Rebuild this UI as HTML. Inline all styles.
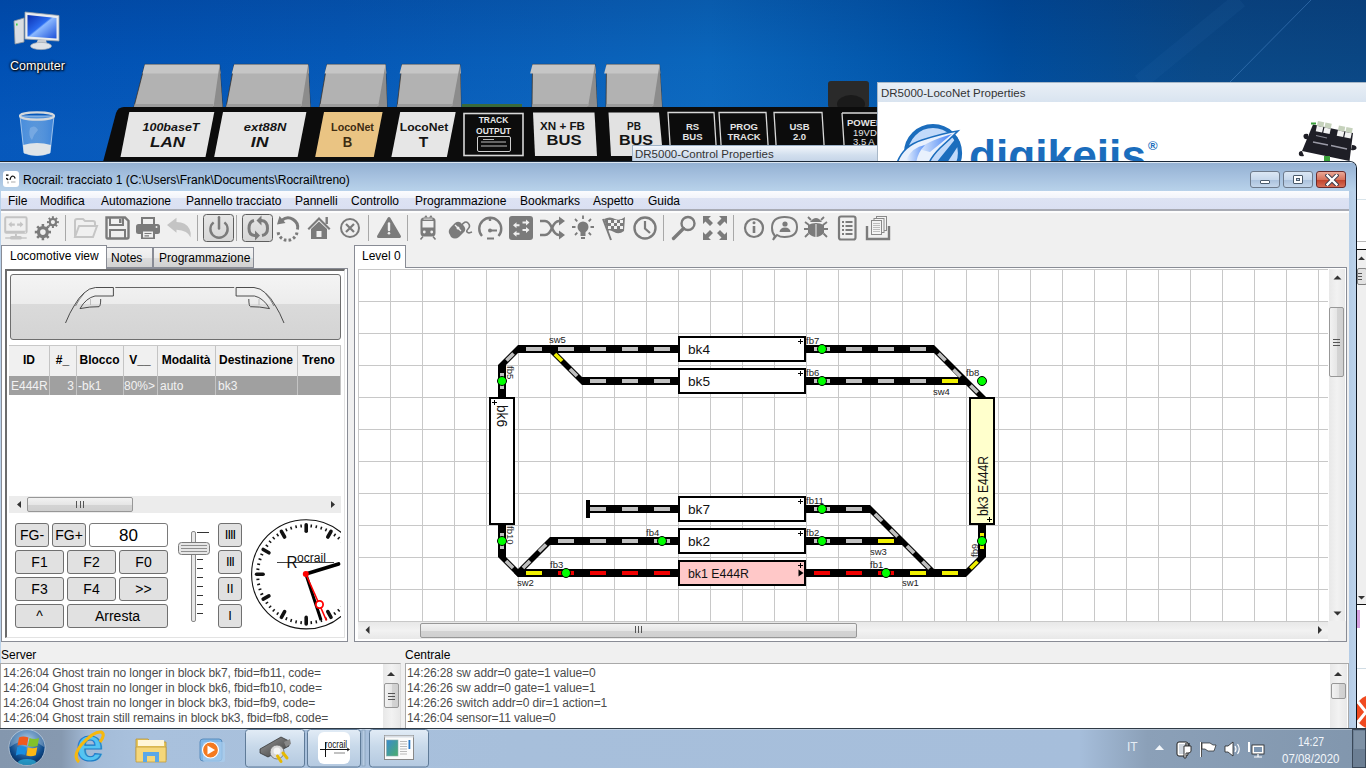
<!DOCTYPE html>
<html><head><meta charset="utf-8">
<style>
*{box-sizing:border-box;margin:0;padding:0}
html,body{width:1366px;height:768px;overflow:hidden;font-family:"Liberation Sans",sans-serif;font-size:12px;color:#000;position:relative}
.a{position:absolute}
.nw{white-space:nowrap}
#desk{left:0;top:0;width:1366px;height:768px;background:linear-gradient(180deg,rgba(0,10,60,.12) 0px,rgba(0,10,60,0) 60px,rgba(60,160,255,0) 60px,rgba(60,160,255,.10) 140px),linear-gradient(90deg,#0050b4 0%,#0558b6 25%,#0a62ba 45%,#0a66bc 52%,#0052a6 70%,#004c9c 74%,#0a4886 88%,#0a4683 100%)}
.menu{position:absolute;top:194px;font-size:12px;color:#000;white-space:nowrap}
.tbtn{position:absolute;top:171px;width:30px;height:17px;border:1px solid #6d7a8b;border-radius:3px;background:linear-gradient(#dbe7f4 0%,#c7d8ec 50%,#aac1dc 52%,#c4d6ea 100%)}
.sep{position:absolute;top:216px;width:1px;height:24px;background:#a8a8a8}
.ico{position:absolute;top:215px;width:24px;height:24px}
.press{position:absolute;top:213px;width:31px;height:29px;border:1px solid #6e6e6e;border-radius:3px;background:linear-gradient(#dcdcdc,#cfcfcf)}
.conn{position:absolute;background:linear-gradient(#c4c4c4 0%,#bdbdbd 25%,#adadad 27%,#a9a9a9 100%)}
.lbl{position:absolute;top:112px;height:45px;background:#e4e4e4;transform:skewX(-8deg);text-align:center;font-weight:bold;color:#111}
.lbl b{display:block;font-style:italic}
.blk{position:absolute;top:112px;height:45px;border:1.5px solid #fff;transform:skewX(-8deg);text-align:center;font-weight:bold;color:#fff;font-size:10px;line-height:13px}
</style></head><body>
<div id="desk" class="a"></div>
<svg class="a" style="left:1050px;top:0" width="316" height="90" viewBox="1050 0 316 90"><path d="M1311 0 L1230 82" stroke="#6aa6e8" stroke-opacity=".35" stroke-width="1"/><path d="M1240 0 L1140 82" stroke="#5a9ae0" stroke-opacity=".06" stroke-width="16"/></svg>

<!-- desktop icons -->
<svg class="a" style="left:10px;top:8px" width="56" height="44" viewBox="10 8 56 44">
 <defs><linearGradient id="scr" x1="0" y1="0" x2="1" y2="1"><stop offset="0" stop-color="#0a2fb0"/><stop offset=".45" stop-color="#2a6cf0"/><stop offset=".5" stop-color="#8ab8ff"/><stop offset="1" stop-color="#1c4fd8"/></linearGradient></defs>
 <path d="M14 21 L24 18 V42 L15 44Z" fill="#d9dde2" stroke="#8c949c" stroke-width=".8"/>
 <rect x="16" y="23.5" width="1.6" height="2" fill="#3cd04a"/>
 <path d="M25 12 L59 15.5 V41 L25 39Z" fill="#e9ecef" stroke="#9aa2aa" stroke-width=".8"/>
 <path d="M27.5 15 L56.5 18 V38.5 L27.5 36.5Z" fill="url(#scr)"/>
 <path d="M38 39.5 L46 40 L47 44 L36 44Z" fill="#c8cdd3"/>
 <ellipse cx="41" cy="46" rx="10.5" ry="3.6" fill="#dfe3e7" stroke="#a6adb4" stroke-width=".7"/>
</svg>
<div class="a nw" style="left:10px;top:59px;font-size:12.5px;color:#fff;text-shadow:0 0 2px #000,1px 1px 2px #000,0 0 3px #000">Computer</div>
<svg class="a" style="left:16px;top:110px" width="42" height="50" viewBox="16 110 42 50">
 <defs><linearGradient id="bin" x1="0" y1="0" x2="1" y2="0"><stop offset="0" stop-color="#5c9ee8" stop-opacity=".75"/><stop offset=".5" stop-color="#9cc8f4" stop-opacity=".55"/><stop offset="1" stop-color="#4a8ee0" stop-opacity=".8"/></linearGradient></defs>
 <path d="M20 116 L54 116 L50 153 Q37 158 24 153Z" fill="url(#bin)" stroke="#bcd6f0" stroke-width=".8"/>
 <ellipse cx="37" cy="116" rx="17" ry="3.6" fill="none" stroke="#d4d8dc" stroke-width="2.2"/>
 <path d="M23 145 Q37 141 51 145 L50 153 Q37 158 24 153Z" fill="#dfe4e8"/>
 <path d="M30 128 Q35 124 38 130 Q34 134 32 140 Q28 136 30 128Z" fill="#8ab6e6" opacity=".6"/>
</svg>
<!-- DR5000 device image -->
<svg class="a" style="left:95px;top:60px" width="790" height="102" viewBox="95 60 790 102">
<path d="M144.9 64.4 H219.6 L222.5 107 H133.9Z" fill="#b2b2b2" stroke="#3a2a1a" stroke-width=".7"/>
<path d="M144.9 64.4 H219.6 L220.5 73.4 H142.5Z" fill="#c6c6c6"/>
<path d="M219.6 64.4 L222.5 107 H213.5Z" fill="#8c8c8c"/>
<path d="M134.70000000000002 104 H213.5 L213.0 107 H133.9Z" fill="#9c9c9c"/>
<path d="M234.2 64.4 H308.1 L310.3 107 H226.1Z" fill="#b2b2b2" stroke="#3a2a1a" stroke-width=".7"/>
<path d="M234.2 64.4 H308.1 L309.0 73.4 H231.79999999999998Z" fill="#c6c6c6"/>
<path d="M308.1 64.4 L310.3 107 H301.3Z" fill="#8c8c8c"/>
<path d="M226.9 104 H301.3 L300.8 107 H226.1Z" fill="#9c9c9c"/>
<path d="M327 64.4 H385.5 L387 107 H319.6Z" fill="#b2b2b2" stroke="#3a2a1a" stroke-width=".7"/>
<path d="M327 64.4 H385.5 L386.4 73.4 H324.6Z" fill="#c6c6c6"/>
<path d="M385.5 64.4 L387 107 H378Z" fill="#8c8c8c"/>
<path d="M320.40000000000003 104 H378 L377.5 107 H319.6Z" fill="#9c9c9c"/>
<path d="M402 64.4 H460 L461 107 H397Z" fill="#b2b2b2" stroke="#3a2a1a" stroke-width=".7"/>
<path d="M402 64.4 H460 L460.9 73.4 H399.6Z" fill="#c6c6c6"/>
<path d="M460 64.4 L461 107 H452Z" fill="#8c8c8c"/>
<path d="M397.8 104 H452 L451.5 107 H397Z" fill="#9c9c9c"/>
<rect x="462" y="104" width="60" height="4" fill="#3a6a3a"/>
<path d="M532.5 64.4 H595 L597 107 H532Z" fill="#b2b2b2" stroke="#3a2a1a" stroke-width=".7"/>
<path d="M532.5 64.4 H595 L595.9 73.4 H530.1Z" fill="#c6c6c6"/>
<path d="M595 64.4 L597 107 H588Z" fill="#8c8c8c"/>
<path d="M532.8 104 H588 L587.5 107 H532Z" fill="#9c9c9c"/>
<path d="M606.5 64.4 H659.5 L662 107 H606Z" fill="#b2b2b2" stroke="#3a2a1a" stroke-width=".7"/>
<path d="M606.5 64.4 H659.5 L660.4 73.4 H604.1Z" fill="#c6c6c6"/>
<path d="M659.5 64.4 L662 107 H653Z" fill="#8c8c8c"/>
<path d="M606.8 104 H653 L652.5 107 H606Z" fill="#9c9c9c"/>
<rect x="828" y="81" width="41" height="27" rx="3" fill="#2a2a2a"/><ellipse cx="851" cy="104" rx="14" ry="9" fill="#1a1a1a"/>
<path d="M124 107 H885 V162 H103 L116 113 Q118 107 124 107Z" fill="#0c0c0c"/>
<path d="M129.3 112 H214.3 L205.5 157 H120.5Z" fill="#e6e6e6"/><text x="171" y="131" text-anchor="middle" font-family="Liberation Sans" font-weight="bold" font-style="italic" font-size="11" fill="#141414" textLength="57" lengthAdjust="spacingAndGlyphs">100baseT</text><text x="167.5" y="146.5" text-anchor="middle" font-family="Liberation Sans" font-weight="bold" font-style="italic" font-size="15" fill="#141414" textLength="35" lengthAdjust="spacingAndGlyphs">LAN</text>
<path d="M223.0 112 H306.40000000000003 L297.6 157 H214.2Z" fill="#e6e6e6"/><text x="265" y="131" text-anchor="middle" font-family="Liberation Sans" font-weight="bold" font-style="italic" font-size="11" fill="#141414" textLength="42.5" lengthAdjust="spacingAndGlyphs">ext88N</text><text x="259.6" y="146.5" text-anchor="middle" font-family="Liberation Sans" font-weight="bold" font-style="italic" font-size="15" fill="#141414" textLength="17.6" lengthAdjust="spacingAndGlyphs">IN</text>
<path d="M324.0 112 H382.6 L373.8 157 H315.2Z" fill="#eac483"/><text x="352.5" y="131" text-anchor="middle" font-family="Liberation Sans" font-weight="bold"  font-size="11" fill="#3e2c12" textLength="42.8" lengthAdjust="spacingAndGlyphs">LocoNet</text><text x="347.6" y="146.5" text-anchor="middle" font-family="Liberation Sans" font-weight="bold"  font-size="15" fill="#3e2c12" textLength="9.5" lengthAdjust="spacingAndGlyphs">B</text>
<path d="M400.2 112 H455.7 L446.9 157 H391.4Z" fill="#e6e6e6"/><text x="424" y="131" text-anchor="middle" font-family="Liberation Sans" font-weight="bold"  font-size="11" fill="#141414" textLength="48.5" lengthAdjust="spacingAndGlyphs">LocoNet</text><text x="423.5" y="146.5" text-anchor="middle" font-family="Liberation Sans" font-weight="bold"  font-size="15" fill="#141414" textLength="9.5" lengthAdjust="spacingAndGlyphs">T</text>
<rect x="464" y="113.5" width="59" height="42" fill="none" stroke="#d8d8d8" stroke-width="1.6"/>
<text x="493.5" y="123" text-anchor="middle" font-family="Liberation Sans" font-weight="bold" font-size="8.5" fill="#e8e8e8">TRACK</text>
<text x="493.5" y="133.5" text-anchor="middle" font-family="Liberation Sans" font-weight="bold" font-size="8.5" fill="#e8e8e8">OUTPUT</text>
<rect x="477.5" y="136.5" width="33" height="15" rx="1.5" fill="none" stroke="#cfcfcf" stroke-width="1"/><path d="M481 142 H506 M483 139.5 H494 M481 146 H507" stroke="#bbb" stroke-width="1.2"/>
<path d="M533 112.5 H594.5 L597 156 H535Z" fill="#e2e2e2"/>
<text x="562.5" y="129.5" text-anchor="middle" font-family="Liberation Sans" font-weight="bold" font-size="10" fill="#141414" textLength="45" lengthAdjust="spacingAndGlyphs">XN + FB</text>
<text x="564" y="145" text-anchor="middle" font-family="Liberation Sans" font-weight="bold" font-size="14.5" fill="#141414" textLength="35" lengthAdjust="spacingAndGlyphs">BUS</text>
<path d="M608.5 112.5 H659 L663 156 H611Z" fill="#e2e2e2"/>
<text x="634" y="129.5" text-anchor="middle" font-family="Liberation Sans" font-weight="bold" font-size="10" fill="#141414">PB</text>
<text x="636" y="145" text-anchor="middle" font-family="Liberation Sans" font-weight="bold" font-size="14.5" fill="#141414" textLength="34" lengthAdjust="spacingAndGlyphs">BUS</text>
<path d="M668 112.5 H714 L717 160 H671Z" fill="none" stroke="#d8d8d8" stroke-width="1.3"/><text x="692.5" y="129.5" text-anchor="middle" font-family="Liberation Sans" font-weight="bold" font-size="9.5" fill="#e4e4e4">RS</text><text x="692.5" y="140" text-anchor="middle" font-family="Liberation Sans" font-weight="bold" font-size="9.5" fill="#e4e4e4">BUS</text>
<path d="M719 112.5 H766 L769 160 H722Z" fill="none" stroke="#d8d8d8" stroke-width="1.3"/><text x="744.0" y="129.5" text-anchor="middle" font-family="Liberation Sans" font-weight="bold" font-size="9.5" fill="#e4e4e4">PROG</text><text x="744.0" y="140" text-anchor="middle" font-family="Liberation Sans" font-weight="bold" font-size="9.5" fill="#e4e4e4">TRACK</text>
<path d="M774 112.5 H822 L825 160 H777Z" fill="none" stroke="#d8d8d8" stroke-width="1.3"/><text x="799.5" y="129.5" text-anchor="middle" font-family="Liberation Sans" font-weight="bold" font-size="9.5" fill="#e4e4e4">USB</text><text x="799.5" y="140" text-anchor="middle" font-family="Liberation Sans" font-weight="bold" font-size="9.5" fill="#e4e4e4">2.0</text>
<path d="M842 113 H885 M842 113 L845 160" fill="none" stroke="#d8d8d8" stroke-width="1.3"/>
<text x="847" y="126" font-family="Liberation Sans" font-weight="bold" font-size="9.5" fill="#e4e4e4">POWER</text>
<text x="853" y="135.5" font-family="Liberation Sans" font-size="9.5" fill="#e4e4e4">19VDC</text>
<text x="853" y="145" font-family="Liberation Sans" font-size="9.5" fill="#e4e4e4">3.5 A</text>
</svg>
<!-- tooltip window -->
<div class="a nw" style="left:632px;top:145px;width:250px;height:17px;background:linear-gradient(#f2f6fb,#d2dfee 60%,#c6d5e8);border:1px solid #9db2c8;border-right:none;font-size:11.5px;color:#333;padding-left:2px;line-height:16px">DR5000-Control Properties</div>
<!-- digikeijs window -->
<div class="a" style="left:877px;top:82px;width:489px;height:90px;background:#fff;border-left:1px solid #a8b8c8;border-top:1px solid #a8b8c8"></div>
<div class="a nw" style="left:878px;top:83px;width:488px;height:19px;background:linear-gradient(#e9eff6,#d9e4f0);font-size:11.5px;color:#333;padding-left:3px;line-height:20px">DR5000-LocoNet Properties</div>
<svg class="a" style="left:890px;top:115px" width="280" height="47" viewBox="890 115 280 47">
 <defs><linearGradient id="dg1" x1="0" y1="0" x2="1" y2="0"><stop offset="0" stop-color="#e6f0fd"/><stop offset="1" stop-color="#3f7ff5"/></linearGradient></defs>
 <circle cx="933" cy="153" r="27" fill="#c2dafa" stroke="#1b6dbd" stroke-width="4.2"/>
 <path d="M897 163 Q903 146 922 140 Q944 133 958 131 Q950 139 940 148 Q932 156 929 163Z" fill="#e9f1fd" stroke="#1b6dbd" stroke-width="1.6"/>
 <path d="M918 149 Q928 141 952 134 Q940 144 930 152Z" fill="url(#dg1)"/>
 <path d="M906 160 Q912 147 925 145 Q918 152 916 163Z" fill="url(#dg1)" opacity=".8"/>
 <path d="M936 163 L957 137 L960 143 L947 163Z" fill="#1b6dbd"/>
 <text x="969" y="171" font-family="Liberation Sans" font-weight="bold" font-size="45" fill="#1b6dbd" textLength="177" lengthAdjust="spacingAndGlyphs">digikeijs</text>
 <text x="1148" y="150" font-family="Liberation Sans" font-weight="bold" font-size="13" fill="#1b6dbd">®</text>
</svg>
<svg class="a" style="left:1295px;top:115px" width="71" height="48" viewBox="1295 115 71 48">
 <path d="M1313 124.5 L1353 133 L1349.5 161 L1302 151Z" fill="#1e1e26"/>
 <path d="M1308 134 Q1303 133 1303.5 137 Q1304.5 140 1308 139Z M1302 151 Q1298 151 1299 155 Q1300 157 1304 156Z M1352 145 Q1357 145 1356.5 148.5 Q1355.5 151 1351 150Z" fill="#1e1e26"/>
 <rect x="1317" y="120.8" width="6.5" height="5" fill="#c6d2bc" transform="rotate(12.0 1317 125.3)"/><rect x="1317" y="125.8" width="6.5" height="5.5" fill="#f2f2f2" transform="rotate(12.0 1317 125.3)"/><rect x="1324.5" y="122.4" width="6.5" height="5" fill="#c6d2bc" transform="rotate(12.0 1324.5 126.9)"/><rect x="1324.5" y="127.4" width="6.5" height="5.5" fill="#f2f2f2" transform="rotate(12.0 1324.5 126.9)"/><rect x="1338" y="125.3" width="6.5" height="5" fill="#c6d2bc" transform="rotate(12.0 1338 129.8)"/><rect x="1338" y="130.3" width="6.5" height="5.5" fill="#f2f2f2" transform="rotate(12.0 1338 129.8)"/><rect x="1345.5" y="126.9" width="6.5" height="5" fill="#c6d2bc" transform="rotate(12.0 1345.5 131.4)"/><rect x="1345.5" y="131.9" width="6.5" height="5.5" fill="#f2f2f2" transform="rotate(12.0 1345.5 131.4)"/>
 <rect x="1311" y="122.5" width="5" height="2" fill="#3aa03a"/>
 <path d="M1313 142 L1328 145 M1331 145.5 L1347 149" stroke="#9a9aa6" stroke-width="1.5"/>
 <path d="M1316 135.5 L1327 138" stroke="#8a8a96" stroke-width="1.2"/>
 <rect x="1324" y="156" width="6" height="5" fill="#3aa03a"/>
</svg>

<!-- main window frame -->
<div class="a" style="left:0;top:161px;width:1357px;height:567px;background:#b9d1ea;border-top:1px solid #1b2838;border-right:1px solid #0d1a28;border-radius:0 7px 0 0"></div>
<div class="a" style="left:0;top:162px;width:1356px;height:29px;border-radius:0 6px 0 0;background:linear-gradient(#dbe6f2 0px,#dbe6f2 1px,#94b1d3 1px,#a6c1df 50%,#b8d2ea 100%)"></div>
<div class="a" style="left:3px;top:171px;width:16px;height:16px;background:#fff;border-radius:3px"><svg class="a" style="left:0;top:0" width="16" height="16"><path d="M3 4.2 H5.5 M3 7.5 Q4.5 7.5 5 9" stroke="#000" stroke-width="1.3" fill="none"/><path d="M7 9 Q7.5 5.5 9.5 5 Q11.5 5 12.2 7.5" stroke="#111" stroke-width="1.2" fill="none"/><path d="M8 11 H12.5" stroke="#888" stroke-width=".7"/><path d="M5 10.5 V12.5" stroke="#777" stroke-width=".8"/></svg></div>
<div class="a nw" style="left:23px;top:173px;font-size:12px;color:#000">Rocrail: tracciato 1 (C:\Users\Frank\Documents\Rocrail\treno)</div>
<div class="tbtn" style="left:1250px"><div class="a" style="left:9px;top:8px;width:10px;height:4px;background:#fff;border:1px solid #4a5a6a;border-radius:1px"></div></div>
<div class="tbtn" style="left:1283px"><div class="a" style="left:9px;top:3px;width:10px;height:9px;background:#fff;border:1px solid #4a5a6a;border-radius:1px"><div class="a" style="left:2px;top:2px;width:4px;height:3px;border:1px solid #4a5a6a;background:#c7d8ec"></div></div></div>
<div class="tbtn" style="left:1316px;border-color:#6b2a2a;background:linear-gradient(#eaa897 0%,#d7735c 50%,#c0412a 52%,#d66f58 100%)"><svg class="a" style="left:8px;top:2px" width="14" height="12" viewBox="0 0 14 12"><path d="M2.5 1.5 L11.5 10.5 M11.5 1.5 L2.5 10.5" stroke="#3a3a4a" stroke-width="4.2" stroke-linecap="square"/><path d="M2.5 1.5 L11.5 10.5 M11.5 1.5 L2.5 10.5" stroke="#fff" stroke-width="2.4" stroke-linecap="square"/></svg></div>
<div class="a" style="left:1px;top:191px;width:1348px;height:22px;background:linear-gradient(#fbfcfe 0px,#f2f4fa 7px,#dde3f3 7px,#dae0f2 18px,#a8abb4 18px,#a8abb4 20px,#fdfdfd 20px)"></div>
<span class="menu" style="left:8px">File</span>
<span class="menu" style="left:40px">Modifica</span>
<span class="menu" style="left:101px">Automazione</span>
<span class="menu" style="left:186px">Pannello tracciato</span>
<span class="menu" style="left:295px">Pannelli</span>
<span class="menu" style="left:351px">Controllo</span>
<span class="menu" style="left:415px">Programmazione</span>
<span class="menu" style="left:520px">Bookmarks</span>
<span class="menu" style="left:593px">Aspetto</span>
<span class="menu" style="left:648px">Guida</span>
<div id="client" class="a" style="left:1px;top:213px;width:1348px;height:515px;background:#f0f0f0"></div>

<!--TOOLBAR-->
<svg class="a" style="left:0;top:211px" width="900" height="34" viewBox="0 211 900 34">
<g fill="none" stroke="#7b7b7b" stroke-width="2.2">
 <!-- 1 monitor disabled -->
 <g stroke="none" fill="#c4c4c4">
  <path d="M6.3 216.3 H25.5 Q27.6 216.3 27.6 218.4 V231.7 Q27.6 233.8 25.5 233.8 H6.3 Q4.2 233.8 4.2 231.7 V218.4 Q4.2 216.3 6.3 216.3Z M6.2 218.2 V230.7 H25.6 V218.2Z" fill-rule="evenodd"/>
  <path d="M8.4 224.6 L11.6 221.6 V223.5 H14.8 V225.7 H11.6 V227.6Z M23.4 224.6 L20.2 221.6 V223.5 H17.1 V225.7 H20.2 V227.6Z"/>
  <rect x="15" y="233.8" width="1.9" height="2.5"/>
  <rect x="5.2" y="237.3" width="21.5" height="1.4"/>
  <rect x="10" y="236.1" width="11.8" height="3.5" rx="1.5"/>
 </g>
 <circle cx="25.3" cy="232.2" r=".6" fill="#f0f0f0" stroke="none"/>
 <!-- 2 gears -->
 <path d="M40.60 226.56 L41.65 226.23 L41.62 224.00 L44.18 224.00 L44.15 226.23 L45.20 226.56 L46.17 227.07 L47.72 225.47 L49.53 227.28 L47.93 228.83 L48.44 229.80 L48.77 230.85 L51.00 230.82 L51.00 233.38 L48.77 233.35 L48.44 234.40 L47.93 235.37 L49.53 236.92 L47.72 238.73 L46.17 237.13 L45.20 237.64 L44.15 237.97 L44.18 240.20 L41.62 240.20 L41.65 237.97 L40.60 237.64 L39.63 237.13 L38.08 238.73 L36.27 236.92 L37.87 235.37 L37.36 234.40 L37.03 233.35 L34.80 233.38 L34.80 230.82 L37.03 230.85 L37.36 229.80 L37.87 228.83 L36.27 227.28 L38.08 225.47 L39.63 227.07Z M45.699999999999996 232.1 A2.8 2.8 0 1 0 40.1 232.1 A2.8 2.8 0 1 0 45.699999999999996 232.1Z M51.26 218.13 L51.93 217.91 L51.86 216.19 L53.94 216.19 L53.87 217.91 L54.55 218.13 L55.18 218.45 L56.34 217.19 L57.81 218.66 L56.55 219.82 L56.87 220.46 L57.09 221.13 L58.81 221.06 L58.81 223.14 L57.09 223.07 L56.87 223.75 L56.55 224.38 L57.81 225.54 L56.34 227.01 L55.18 225.75 L54.54 226.07 L53.87 226.29 L53.94 228.01 L51.86 228.01 L51.93 226.29 L51.25 226.07 L50.62 225.75 L49.46 227.01 L47.99 225.54 L49.25 224.38 L48.93 223.74 L48.71 223.07 L46.99 223.14 L46.99 221.06 L48.71 221.13 L48.93 220.45 L49.25 219.82 L47.99 218.66 L49.46 217.19 L50.62 218.45Z M55.0 222.1 A2.1 2.1 0 1 0 50.8 222.1 A2.1 2.1 0 1 0 55.0 222.1Z" fill="#7b7b7b" stroke="none" fill-rule="evenodd"/>
 <!-- 3 folder disabled -->
 <path d="M75 237 V221 Q75 219 77 219 H83 L85 221 H93 Q95 221 95 223 V225 M75 237 L79 226 H97 L93 237 Z" stroke="#c6c6c6" fill="none" stroke-width="2"/>
 <!-- 4 save -->
 <path d="M106.5 217.5 H125 L128.5 221 V237 Q128.5 238.5 127 238.5 H108 Q106.5 238.5 106.5 237 Z" stroke-width="2.4"/>
 <path d="M110 217.5 V225 H123 V217.5 M110 238.5 V230 H125 V238.5" stroke-width="2"/>
 <rect x="119" y="219" width="2.5" height="4" fill="#7b7b7b" stroke="none"/>
 <!-- 5 printer -->
 <g fill="#7b7b7b" stroke="none">
  <path d="M141 224 V217 H155 V224 H153 V219 H143 V224Z"/>
  <rect x="136" y="224" width="24" height="10" rx="2.5"/>
  <rect x="141" y="230" width="14" height="9" fill="#7b7b7b"/>
 </g>
 <rect x="143" y="231.5" width="10" height="6" fill="#f0f0f0" stroke="none"/>
 <path d="M144.5 233.5 H151.5 M144.5 235.8 H149" stroke-width="1.2"/>
 <circle cx="156.5" cy="227" r="1" fill="#f0f0f0" stroke="none"/>
 <!-- 6 undo disabled -->
 <path d="M167 225 L176.5 217.8 V222 Q186 222 189.5 229 Q191.5 233 190.6 237.5 Q188 230.5 176.5 229.8 V232.7Z" fill="#c4c4c4" stroke="none"/>
</g>
<!-- separators -->
<g fill="#a8a8a8">
 <rect x="65" y="215" width="1" height="26"/><rect x="197" y="215" width="1" height="26"/>
 <rect x="236" y="215" width="1" height="26"/><rect x="368" y="215" width="1" height="26"/>
 <rect x="407" y="215" width="1" height="26"/><rect x="663" y="215" width="1" height="26"/>
 <rect x="733" y="215" width="1" height="26"/>
</g>
<defs><linearGradient id="prs" x1="0" y1="0" x2="0" y2="1"><stop offset="0" stop-color="#e6e6e6"/><stop offset="1" stop-color="#d6d6d6"/></linearGradient></defs>
<rect x="203.5" y="214.5" width="30" height="27" rx="3" fill="url(#prs)" stroke="#5e5e5e"/>
<rect x="242.5" y="214.5" width="30" height="27" rx="3" fill="url(#prs)" stroke="#5e5e5e"/>
<g fill="none" stroke="#7b7b7b" stroke-width="2.4">
 <path d="M213.6 222.4 A8.6 8.6 0 1 0 224.4 222.4"/>
 <path d="M219 217.2 V228.5" stroke-linecap="round" stroke-width="2.5"/>
</g>
<g fill="none" stroke="#7b7b7b" stroke-width="3">
 <path d="M254 220.5 Q249 221.5 249 228.5 Q249 235 254.5 235.5 H256"/>
 <path d="M262 235.5 Q267.5 234.5 267.5 228.5 Q267.5 221 261.5 220.5 H260"/>
</g>
<g fill="#7b7b7b">
 <path d="M255 230.5 L260 235.5 L255 240.5Z"/>
 <path d="M261.5 215.5 L256.5 220.5 L261.5 225.5Z"/>
 <path d="M277 224.5 L279.5 216 L285.5 223Z"/>
</g>
<path d="M282 220.2 A9.6 9.6 0 0 1 297.5 229.5" fill="none" stroke="#7b7b7b" stroke-width="3"/>
<path d="M297 232.5 A9.6 9.6 0 0 1 278 231.5" fill="none" stroke="#7b7b7b" stroke-width="3" stroke-dasharray="2.6 2.2"/>
<g fill="#7b7b7b">
 <!-- 10 house -->
 <path d="M307.5 228.5 L319 217 L330.5 228.5 L329 230 L319 220 L309 230Z"/>
 <rect x="325.5" y="217" width="2.4" height="7"/>
 <path d="M311 229 L319 221.5 L327 229 V239 H311Z"/>
</g>
<rect x="316.5" y="231" width="5" height="6" fill="#f0f0f0"/>
<g fill="none" stroke="#7b7b7b" stroke-width="2">
 <!-- 11 x circle -->
 <circle cx="350" cy="228" r="9"/>
 <path d="M346 224 L354 232 M354 224 L346 232" stroke-width="2.2"/>
</g>
<!-- 12 warning -->
<path d="M389 218.5 L399.5 236.5 H378.5Z" fill="#7b7b7b" stroke="#7b7b7b" stroke-width="3" stroke-linejoin="round"/>
<path d="M389 223.5 V230" stroke="#f0f0f0" stroke-width="2.4" stroke-linecap="round"/><circle cx="389" cy="233.3" r="1.3" fill="#f0f0f0"/>
<!-- 13 train -->
<g fill="#7b7b7b">
 <rect x="420.5" y="217.5" width="15" height="19" rx="3.5"/>
 <path d="M424 217.5 L425.5 215.5 H426.5 L427.5 217.5Z M429 217.5 L430.5 215.5 H431.5 L432.5 217.5Z"/>
</g>
<rect x="422.5" y="221" width="11" height="6.5" fill="#f0f0f0"/>
<rect x="423.5" y="218.5" width="9" height="1.2" fill="#dcdcdc"/>
<circle cx="424.3" cy="232" r="1.4" fill="#f0f0f0"/><circle cx="431.7" cy="232" r="1.4" fill="#f0f0f0"/>
<path d="M423 236.5 L420.5 239.5 M433 236.5 L435.5 239.5" stroke="#7b7b7b" stroke-width="1.6"/>
<!-- 14 mouse -->
<g>
 <path d="M450 235 Q447 231 451 227 L455 223 Q459 220 462 224 L464 226 Q467 230 463 233 L459 237 Q455 240 451 237Z" fill="#7b7b7b"/>
 <path d="M455 225 L461 231" stroke="#f0f0f0" stroke-width="1.2"/>
 <circle cx="458" cy="228" r="1.5" fill="#f0f0f0"/>
 <path d="M461 226 Q465 220 468 223 Q471 226 468 229 Q465 232 469 233 L472 232" fill="none" stroke="#7b7b7b" stroke-width="1.6"/>
</g>
<g fill="none" stroke="#7b7b7b" stroke-width="2.4">
 <!-- 15 speedometer -->
 <path d="M482 236 A11 11 0 1 1 498.5 236"/>
 <path d="M490 230.5 H497" stroke-width="2"/>
 <path d="M487 238.5 H494" stroke-width="2"/>
 <path d="M490 219 V221"/>
</g>
<circle cx="490" cy="230.5" r="2" fill="#7b7b7b"/>
<!-- 16 switch square -->
<rect x="509" y="216" width="24" height="24" rx="3" fill="#7b7b7b"/>
<g fill="#f0f0f0">
 <path d="M513 225.3 L516.5 222.3 V224.3 H519.5 V226.3 H516.5 V228.3Z"/>
 <path d="M529.5 222.4 L526 219.4 V221.4 H522.5 V223.4 H526 V225.4Z"/>
 <path d="M513 233.7 L516.5 230.7 V232.7 H519.5 V234.7 H516.5 V236.7Z"/>
 <path d="M529.5 230 L526 227 V229 H522.5 V231 H526 V233Z"/>
</g>
<!-- 17 shuffle -->
<g fill="none" stroke="#7b7b7b" stroke-width="2.6">
 <path d="M540 221 H545 Q549 221 552 228 Q555 235 559 235 H561"/>
 <path d="M540 235 H545 Q549 235 552 228 Q555 221 559 221 H561"/>
</g>
<g fill="#7b7b7b"><path d="M559 216.5 L565 221 L559 225.5Z M559 230.5 L565 235 L559 239.5Z"/></g>
<!-- 18 bulb -->
<g fill="#7b7b7b">
 <circle cx="583" cy="227" r="5.5"/>
 <rect x="580.5" y="231" width="5" height="5"/>
 <rect x="581" y="237" width="4" height="2"/>
</g>
<g stroke="#7b7b7b" stroke-width="1.8">
 <path d="M583 215.5 V219 M572 227 H575.5 M590.5 227 H594 M575 219 L577.3 221.3 M591 219 L588.7 221.3 M575 235 L577.3 232.7 M591 235 L588.7 232.7"/>
</g>
<!-- 19 flag -->
<path d="M603 219 L611 240" stroke="#7b7b7b" stroke-width="2"/>
<path d="M604 219 Q610 216 615 219 Q620 221 625 217 L624 231 Q619 235 614 232 Q609 229 608 231Z" fill="#7b7b7b"/>
<g fill="#f0f0f0"><rect x="608" y="220" width="3" height="3"/><rect x="614" y="220" width="3" height="3"/><rect x="620" y="220" width="3" height="3"/><rect x="611" y="223" width="3" height="3"/><rect x="617" y="223" width="3" height="3"/><rect x="608" y="226" width="3" height="3"/><rect x="614" y="226" width="3" height="3"/><rect x="620" y="226" width="3" height="3"/></g>
<!-- 20 clock -->
<circle cx="645" cy="228" r="10.5" fill="none" stroke="#7b7b7b" stroke-width="2.4"/>
<path d="M645 221 V228.5 L650 233" fill="none" stroke="#7b7b7b" stroke-width="2.2"/>
<!-- 21 magnifier -->
<circle cx="688" cy="223.5" r="6.5" fill="none" stroke="#7b7b7b" stroke-width="2.4"/>
<path d="M683.5 228.5 L673.5 238.5" stroke="#7b7b7b" stroke-width="3.4" stroke-linecap="round"/>
<!-- 22 expand -->
<g fill="#7b7b7b">
 <path d="M703 216 H711 L708.5 218.5 L713 223 L710 226 L705.5 221.5 L703 224Z"/>
 <path d="M727 216 H719 L721.5 218.5 L717 223 L720 226 L724.5 221.5 L727 224Z"/>
 <path d="M703 240 H711 L708.5 237.5 L713 233 L710 230 L705.5 234.5 L703 232Z"/>
 <path d="M727 240 H719 L721.5 237.5 L717 233 L720 230 L724.5 234.5 L727 232Z"/>
</g>
<!-- 23 info -->
<circle cx="754" cy="228" r="9" fill="none" stroke="#7b7b7b" stroke-width="2.2"/>
<rect x="752.7" y="226" width="2.6" height="7" fill="#7b7b7b"/><circle cx="754" cy="222.8" r="1.5" fill="#7b7b7b"/>
<!-- 24 chat -->
<path d="M775 236 Q772 233 772 228 Q772 217 784.5 217 Q797 217 797 227 Q797 237 784.5 237 Q780 237 777 235 L773 240Z" fill="none" stroke="#7b7b7b" stroke-width="2"/>
<circle cx="785" cy="224" r="2.6" fill="#7b7b7b"/><path d="M779.5 232 Q780 227.5 785 227.5 Q790 227.5 790.5 232Z" fill="#7b7b7b"/>
<!-- 25 bug -->
<g fill="#7b7b7b">
 <path d="M810 222 Q816 214 822 222Z"/>
 <path d="M808 225 Q816 221 824 225 V233 Q816 241 808 233Z"/>
</g>
<path d="M816 224 V238" stroke="#f0f0f0" stroke-width="1"/>
<g fill="none" stroke="#7b7b7b" stroke-width="1.8"><path d="M804 229 H808 M824 229 H828 M805 222 L809 225 M827 222 L823 225 M805 237 L808.5 233.5 M827 237 L823.5 233.5 M808 217 L811 220 M824 217 L821 220"/></g>
<!-- 26 list -->
<rect x="839" y="216.5" width="16.5" height="23" rx="2" fill="none" stroke="#7b7b7b" stroke-width="2.2"/>
<g fill="#7b7b7b"><rect x="842" y="221" width="2" height="2"/><rect x="845.5" y="221" width="7" height="2"/><rect x="842" y="225" width="2" height="2"/><rect x="845.5" y="225" width="7" height="2"/><rect x="842" y="229" width="2" height="2"/><rect x="845.5" y="229" width="7" height="2"/><rect x="842" y="233" width="2" height="2"/><rect x="845.5" y="233" width="7" height="2"/></g>
<!-- 27 documents -->
<path d="M867 226 V239 H889 V226" fill="none" stroke="#7b7b7b" stroke-width="2.4"/>
<rect x="876.5" y="216.5" width="10" height="14" fill="#f4f4f4" stroke="#8a8a8a" stroke-width="1"/>
<rect x="874" y="218.5" width="10" height="14" fill="#f4f4f4" stroke="#8a8a8a" stroke-width="1"/>
<rect x="871.5" y="220.5" width="10" height="14" fill="#f4f4f4" stroke="#8a8a8a" stroke-width="1"/>
<g stroke="#b0b0b0" stroke-width=".8"><path d="M873 223.5 H880 M873 225.5 H880 M873 227.5 H880 M873 229.5 H880 M873 231.5 H880"/></g>
</svg>


<!--LEFTPANEL-->
<!-- tabs -->
<div class="a" style="left:1px;top:268px;width:347px;height:374px;background:#fff;border:1px solid #898c95"></div>
<div class="a nw" style="left:1px;top:245px;width:106px;height:24px;background:#fff;border:1px solid #898c95;border-bottom:none;padding:3px 0 0 8px;font-size:12px">Locomotive view</div>
<div class="a nw" style="left:106px;top:247px;width:47px;height:21px;background:linear-gradient(#f3f3f3 0%,#ebebeb 50%,#dcdcdc 51%,#d2d2d2 100%);border:1px solid #898c95;padding:3px 0 0 4px;font-size:12px">Notes</div>
<div class="a nw" style="left:153px;top:247px;width:101px;height:21px;background:linear-gradient(#f3f3f3 0%,#ebebeb 50%,#dcdcdc 51%,#d2d2d2 100%);border:1px solid #898c95;padding:3px 0 0 5px;font-size:12px">Programmazione</div>
<!-- sunken inner -->
<div class="a" style="left:5px;top:269px;width:340px;height:369px;border-top:2px solid #6c6c6c;border-left:2px solid #6c6c6c;border-right:1px solid #e3e3e3;border-bottom:1px solid #e3e3e3"></div>
<!-- loco image box -->
<div class="a" style="left:10px;top:274px;width:331px;height:66px;border:1px solid #6e6e6e;border-radius:3px;background:linear-gradient(#f4f4f4 0%,#ececec 45%,#dadada 46%,#d4d4d4 100%)"></div>
<svg class="a" style="left:10px;top:274px" width="331" height="66" viewBox="10 274 331 66">
 <g id="cabL" fill="none" stroke="#3a3a3a" stroke-width=".9">
  <path d="M65.5 323 Q70 312 74 306 Q79 297 84 293 Q89 288 95.5 287.5 H113.4 V296 H95 Q86 298 80 308.6 Q90 306.5 99 306.7 Q100.7 306 100.7 299"/>
  <path d="M84 293.5 Q79 299 75.5 306" stroke-width=".6"/>
  <path d="M90.5 299 V305" stroke="#aaa" stroke-width=".7"/>
 </g>
 <path d="M115.3 287.5 H234.2" stroke="#555" stroke-width=".9"/>
 <g transform="translate(349.5 0) scale(-1 1)" fill="none" stroke="#3a3a3a" stroke-width=".9">
  <path d="M65.5 323 Q70 312 74 306 Q79 297 84 293 Q89 288 95.5 287.5 H113.4 V296 H95 Q86 298 80 308.6 Q90 306.5 99 306.7 Q100.7 306 100.7 299"/>
  <path d="M84 293.5 Q79 299 75.5 306" stroke-width=".6"/>
  <path d="M90.5 299 V305" stroke="#aaa" stroke-width=".7"/>
 </g>
</svg>
<!-- table -->
<div class="a" style="left:9px;top:345px;width:332px;height:31px;background:#f0f0f0;border-top:1px solid #c8c8c8"></div>
<div class="a" style="left:9px;top:376px;width:332px;height:19px;background:#a0a0a0"></div>
<div class="a" style="left:49px;top:346px;width:1px;height:49px;background:#c4c4c4"></div>
<div class="a" style="left:76px;top:346px;width:1px;height:49px;background:#c4c4c4"></div>
<div class="a" style="left:123px;top:346px;width:1px;height:49px;background:#c4c4c4"></div>
<div class="a" style="left:157px;top:346px;width:1px;height:49px;background:#c4c4c4"></div>
<div class="a" style="left:215px;top:346px;width:1px;height:49px;background:#c4c4c4"></div>
<div class="a" style="left:297px;top:346px;width:1px;height:49px;background:#c4c4c4"></div>
<div class="a" style="left:340px;top:346px;width:1px;height:49px;background:#c4c4c4"></div>
<div class="a nw" style="left:9px;top:353px;width:40px;text-align:center;font-weight:bold">ID</div>
<div class="a nw" style="left:49px;top:353px;width:27px;text-align:center;font-weight:bold">#_</div>
<div class="a nw" style="left:76px;top:353px;width:47px;text-align:center;font-weight:bold">Blocco</div>
<div class="a nw" style="left:123px;top:353px;width:34px;text-align:center;font-weight:bold">V__</div>
<div class="a nw" style="left:157px;top:353px;width:58px;text-align:center;font-weight:bold">Modalità</div>
<div class="a nw" style="left:215px;top:353px;width:82px;text-align:center;font-weight:bold">Destinazione</div>
<div class="a nw" style="left:297px;top:353px;width:43px;text-align:center;font-weight:bold">Treno</div>
<div class="a nw" style="left:11px;top:379px;color:#f2f2f2">E444R</div>
<div class="a nw" style="left:49px;top:379px;width:25px;text-align:right;color:#f2f2f2">3</div>
<div class="a nw" style="left:78px;top:379px;color:#f2f2f2">-bk1</div>
<div class="a nw" style="left:124px;top:379px;color:#f2f2f2">80%&gt;</div>
<div class="a nw" style="left:160px;top:379px;color:#f2f2f2">auto</div>
<div class="a nw" style="left:218px;top:379px;color:#f2f2f2">bk3</div>
<!-- h scrollbar -->
<div class="a" style="left:9px;top:496px;width:332px;height:17px;background:#ececec"></div>
<svg class="a" style="left:9px;top:496px" width="332" height="17"><path d="M8 8.5 L12 5 V12Z" fill="#333"/><path d="M326 8.5 L322 5 V12Z" fill="#333"/></svg>
<div class="a" style="left:27px;top:497px;width:106px;height:15px;border:1px solid #979797;border-radius:2px;background:linear-gradient(#f2f2f2 0%,#e6e6e6 50%,#d4d4d4 51%,#cfcfcf 100%)"></div>
<div class="a" style="left:76px;top:501px;width:8px;height:7px;border-left:1px solid #555;border-right:1px solid #555"><div class="a" style="left:2.5px;top:0;width:1px;height:7px;background:#555"></div></div>
<!-- buttons -->
<style>
.btn{position:absolute;border:1px solid #707070;border-radius:3px;background:linear-gradient(#f2f2f2 0%,#ebebeb 50%,#dddddd 51%,#cfcfcf 100%);text-align:center;font-size:14px;line-height:22px;color:#000}
.btn2{position:absolute;border:1px solid #707070;border-radius:3px;background:#e1e1e1;text-align:center;font-size:14px;line-height:22px;color:#000}
</style>
<div class="btn2" style="left:15px;top:523px;width:34px;height:24px">FG-</div>
<div class="btn2" style="left:52px;top:523px;width:34px;height:24px">FG+</div>
<div class="a" style="left:89px;top:523px;width:79px;height:24px;border:1px solid #7a7a7a;border-radius:3px;background:#fff;text-align:center;font-size:17px;line-height:23px">80</div>
<div class="btn2" style="left:15px;top:550px;width:49px;height:24px">F1</div>
<div class="btn2" style="left:67px;top:550px;width:49px;height:24px">F2</div>
<div class="btn2" style="left:119px;top:550px;width:49px;height:24px">F0</div>
<div class="btn2" style="left:15px;top:577px;width:49px;height:24px">F3</div>
<div class="btn2" style="left:67px;top:577px;width:49px;height:24px">F4</div>
<div class="btn2" style="left:119px;top:577px;width:49px;height:24px">&gt;&gt;</div>
<div class="btn2" style="left:15px;top:604px;width:49px;height:24px">^</div>
<div class="btn2" style="left:67px;top:604px;width:101px;height:24px">Arresta</div>
<!-- slider -->
<div class="a" style="left:191px;top:531px;width:5px;height:91px;border:1px solid #8a8a8a;border-radius:2px;background:#e8e8e8"></div>
<svg class="a" style="left:176px;top:528px" width="36" height="96" viewBox="176 528 36 96">
 <g stroke="#333" stroke-width="1"><path d="M197 532.5 H209 M197 542.5 H206 M197 559.5 H203 M197 568.5 H203 M197 577.5 H203 M197 586.5 H203 M197 595.5 H203 M197 604.5 H203 M197 613.5 H203"/></g>
 <rect x="178.5" y="542.5" width="31" height="12" rx="3" fill="#e6e6e6" stroke="#7a7a7a"/>
 <g stroke="#777" stroke-width=".8"><path d="M181 545.5 H207 M181 548.5 H207 M181 551.5 H207"/></g>
</svg>
<div class="btn2" style="left:218px;top:523px;width:24px;height:24px;font-size:13px;letter-spacing:-1px">IIII</div>
<div class="btn2" style="left:218px;top:550px;width:24px;height:24px;font-size:13px;letter-spacing:-1px">III</div>
<div class="btn2" style="left:218px;top:577px;width:24px;height:24px;font-size:13px">II</div>
<div class="btn2" style="left:218px;top:604px;width:24px;height:24px;font-size:13px">I</div>
<!-- clock -->
<svg class="a" style="left:248px;top:515px" width="93" height="120" viewBox="248 515 93 120">
 <circle cx="306.2" cy="574.3" r="54.6" fill="#fff" stroke="#111" stroke-width="1.1"/>
 <g stroke="#111"><path d="M306.2 524.7 L306.2 531.2" stroke-width="3.6" stroke-linecap="round"/><path d="M311.4 524.5 L311.1 527.5" stroke-width="1.5" stroke-linecap="butt"/><path d="M316.6 525.3 L316.0 528.2" stroke-width="1.5" stroke-linecap="butt"/><path d="M321.7 526.7 L320.8 529.5" stroke-width="1.5" stroke-linecap="butt"/><path d="M326.6 528.5 L325.4 531.3" stroke-width="1.5" stroke-linecap="butt"/><path d="M331.0 531.3 L327.8 537.0" stroke-width="3.6" stroke-linecap="round"/><path d="M335.6 533.8 L333.9 536.2" stroke-width="1.5" stroke-linecap="butt"/><path d="M339.7 537.1 L337.7 539.3" stroke-width="1.5" stroke-linecap="butt"/><path d="M343.4 540.8 L341.2 542.8" stroke-width="1.5" stroke-linecap="butt"/><path d="M346.7 544.9 L344.3 546.6" stroke-width="1.5" stroke-linecap="butt"/><path d="M349.2 549.5 L343.5 552.8" stroke-width="3.6" stroke-linecap="round"/><path d="M352.0 553.9 L349.2 555.1" stroke-width="1.5" stroke-linecap="butt"/><path d="M353.8 558.8 L351.0 559.7" stroke-width="1.5" stroke-linecap="butt"/><path d="M355.2 563.9 L352.3 564.5" stroke-width="1.5" stroke-linecap="butt"/><path d="M356.0 569.1 L353.0 569.4" stroke-width="1.5" stroke-linecap="butt"/><path d="M355.8 574.3 L349.3 574.3" stroke-width="3.6" stroke-linecap="round"/><path d="M356.0 579.5 L353.0 579.2" stroke-width="1.5" stroke-linecap="butt"/><path d="M355.2 584.7 L352.3 584.1" stroke-width="1.5" stroke-linecap="butt"/><path d="M353.8 589.8 L351.0 588.9" stroke-width="1.5" stroke-linecap="butt"/><path d="M352.0 594.7 L349.2 593.5" stroke-width="1.5" stroke-linecap="butt"/><path d="M349.2 599.1 L343.5 595.8" stroke-width="3.6" stroke-linecap="round"/><path d="M346.7 603.7 L344.3 602.0" stroke-width="1.5" stroke-linecap="butt"/><path d="M343.4 607.8 L341.2 605.8" stroke-width="1.5" stroke-linecap="butt"/><path d="M339.7 611.5 L337.7 609.3" stroke-width="1.5" stroke-linecap="butt"/><path d="M335.6 614.8 L333.9 612.4" stroke-width="1.5" stroke-linecap="butt"/><path d="M331.0 617.3 L327.8 611.6" stroke-width="3.6" stroke-linecap="round"/><path d="M326.6 620.1 L325.4 617.3" stroke-width="1.5" stroke-linecap="butt"/><path d="M321.7 621.9 L320.8 619.1" stroke-width="1.5" stroke-linecap="butt"/><path d="M316.6 623.3 L316.0 620.4" stroke-width="1.5" stroke-linecap="butt"/><path d="M311.4 624.1 L311.1 621.1" stroke-width="1.5" stroke-linecap="butt"/><path d="M306.2 623.9 L306.2 617.4" stroke-width="3.6" stroke-linecap="round"/><path d="M301.0 624.1 L301.3 621.1" stroke-width="1.5" stroke-linecap="butt"/><path d="M295.8 623.3 L296.4 620.4" stroke-width="1.5" stroke-linecap="butt"/><path d="M290.7 621.9 L291.6 619.1" stroke-width="1.5" stroke-linecap="butt"/><path d="M285.8 620.1 L287.0 617.3" stroke-width="1.5" stroke-linecap="butt"/><path d="M281.4 617.3 L284.6 611.6" stroke-width="3.6" stroke-linecap="round"/><path d="M276.8 614.8 L278.5 612.4" stroke-width="1.5" stroke-linecap="butt"/><path d="M272.7 611.5 L274.7 609.3" stroke-width="1.5" stroke-linecap="butt"/><path d="M269.0 607.8 L271.2 605.8" stroke-width="1.5" stroke-linecap="butt"/><path d="M265.7 603.7 L268.1 602.0" stroke-width="1.5" stroke-linecap="butt"/><path d="M263.2 599.1 L268.9 595.9" stroke-width="3.6" stroke-linecap="round"/><path d="M260.4 594.7 L263.2 593.5" stroke-width="1.5" stroke-linecap="butt"/><path d="M258.6 589.8 L261.4 588.9" stroke-width="1.5" stroke-linecap="butt"/><path d="M257.2 584.7 L260.1 584.1" stroke-width="1.5" stroke-linecap="butt"/><path d="M256.4 579.5 L259.4 579.2" stroke-width="1.5" stroke-linecap="butt"/><path d="M256.6 574.3 L263.1 574.3" stroke-width="3.6" stroke-linecap="round"/><path d="M256.4 569.1 L259.4 569.4" stroke-width="1.5" stroke-linecap="butt"/><path d="M257.2 563.9 L260.1 564.5" stroke-width="1.5" stroke-linecap="butt"/><path d="M258.6 558.8 L261.4 559.7" stroke-width="1.5" stroke-linecap="butt"/><path d="M260.4 553.9 L263.2 555.1" stroke-width="1.5" stroke-linecap="butt"/><path d="M263.2 549.5 L268.9 552.8" stroke-width="3.6" stroke-linecap="round"/><path d="M265.7 544.9 L268.1 546.6" stroke-width="1.5" stroke-linecap="butt"/><path d="M269.0 540.8 L271.2 542.8" stroke-width="1.5" stroke-linecap="butt"/><path d="M272.7 537.1 L274.7 539.3" stroke-width="1.5" stroke-linecap="butt"/><path d="M276.8 533.8 L278.5 536.2" stroke-width="1.5" stroke-linecap="butt"/><path d="M281.4 531.3 L284.6 537.0" stroke-width="3.6" stroke-linecap="round"/><path d="M285.8 528.5 L287.0 531.3" stroke-width="1.5" stroke-linecap="butt"/><path d="M290.7 526.7 L291.6 529.5" stroke-width="1.5" stroke-linecap="butt"/><path d="M295.8 525.3 L296.4 528.2" stroke-width="1.5" stroke-linecap="butt"/><path d="M301.0 524.5 L301.3 527.5" stroke-width="1.5" stroke-linecap="butt"/></g>
 <text x="286.5" y="568" font-family="Liberation Sans" font-size="17" fill="#111" textLength="11" lengthAdjust="spacingAndGlyphs">R</text>
 <text x="297" y="562" font-family="Liberation Sans" font-size="12" fill="#111" textLength="29" lengthAdjust="spacingAndGlyphs">ocrail</text>
 <path d="M277 562.5 H334" stroke="#111" stroke-width=".8"/>
 <path d="M305.8 574 L338.5 564" stroke="#000" stroke-width="3.8" stroke-linecap="round"/>
 <path d="M305.8 574 L321 620" stroke="#000" stroke-width="3"/>
 <path d="M305.8 574 L326.5 620.5" stroke="#f00" stroke-width="1.6"/>
 <circle cx="305.8" cy="574" r="3" fill="#f00"/>
 <circle cx="319.5" cy="604.5" r="3.6" fill="#fff" stroke="#f00" stroke-width="1.8"/>
</svg>


<!--PLAN-->
<div class="a" style="left:354px;top:267px;width:993px;height:375px;background:#fff;border:1px solid #898c95"></div>
<div class="a nw" style="left:354px;top:245px;width:52px;height:23px;background:#fff;border:1px solid #898c95;border-bottom:none;padding:3px 0 0 7px;font-size:12px">Level 0</div>
<div class="a" style="left:1329px;top:269px;width:16px;height:352px;background:linear-gradient(90deg,#e8e8e8,#f2f2f2 50%,#e8e8e8)"></div>
<div class="a" style="left:358px;top:622px;width:970px;height:17px;background:linear-gradient(#e8e8e8,#f2f2f2 50%,#e8e8e8)"></div>
<div class="a" style="left:1329px;top:307px;width:15px;height:70px;border:1px solid #979797;border-radius:2px;background:linear-gradient(90deg,#f2f2f2 0%,#e6e6e6 50%,#d4d4d4 51%,#cfcfcf 100%)"></div>
<div class="a" style="left:420px;top:623px;width:437px;height:15px;border:1px solid #979797;border-radius:2px;background:linear-gradient(#f2f2f2 0%,#e6e6e6 50%,#d4d4d4 51%,#cfcfcf 100%)"></div>
<svg class="a" style="left:354px;top:267px" width="993" height="375" viewBox="354 267 993 375">
<rect x="1328" y="621" width="18" height="20" fill="#efefef"/>
<path d="M1333.5 279.5 L1337.5 275.5 L1341.5 279.5Z M1333.5 611.5 L1337.5 615.5 L1341.5 611.5Z M365.5 630 L369.5 626 V634Z M1322 630 L1318 626 V634Z" fill="#333"/>
<path d="M1333 339.5 H1340 M1333 342.5 H1340 M1333 345.5 H1340 M635.5 626 V633 M638.5 626 V633 M641.5 626 V633" stroke="#555" stroke-width="1"/>
<g stroke="#c8c8c8" stroke-width="1">
<path d="M358.5 269 V621 M390.5 269 V621 M422.5 269 V621 M454.5 269 V621 M486.5 269 V621 M518.5 269 V621 M550.5 269 V621 M582.5 269 V621 M614.5 269 V621 M646.5 269 V621 M678.5 269 V621 M710.5 269 V621 M742.5 269 V621 M774.5 269 V621 M806.5 269 V621 M838.5 269 V621 M870.5 269 V621 M902.5 269 V621 M934.5 269 V621 M966.5 269 V621 M998.5 269 V621 M1030.5 269 V621 M1062.5 269 V621 M1094.5 269 V621 M1126.5 269 V621 M1158.5 269 V621 M1190.5 269 V621 M1222.5 269 V621 M1254.5 269 V621 M1286.5 269 V621 M1318.5 269 V621 M358 269.5 H1328 M358 301.5 H1328 M358 333.5 H1328 M358 365.5 H1328 M358 397.5 H1328 M358 429.5 H1328 M358 461.5 H1328 M358 493.5 H1328 M358 525.5 H1328 M358 557.5 H1328 M358 589.5 H1328 M358 621.5 H1328"/></g>
<g fill="none" stroke="#000" stroke-width="8">
<path d="M502 397 V365"/>
<path d="M518 349 H678"/>
<path d="M806 349 H934"/>
<path d="M582 381 H678"/>
<path d="M806 381 H966"/>
<path d="M502 525 V557"/>
<path d="M518 573 H678"/>
<path d="M550 541 H678"/>
<path d="M588 509 H678"/>
<path d="M806 509 H870"/>
<path d="M806 541 H902"/>
<path d="M806 573 H966"/>
<path d="M982 557 V525"/>
</g><g fill="none" stroke="#000" stroke-width="5.7" stroke-linecap="square">
<path d="M502 365 L518 349"/>
<path d="M934 349 L982 397"/>
<path d="M550 349 L582 381"/>
<path d="M502 557 L518 573"/>
<path d="M518 573 L550 541"/>
<path d="M870 509 L934 573"/>
<path d="M966 573 L982 557"/>
</g>
<rect x="586" y="500" width="4" height="18" fill="#000"/>
<rect x="526.0" y="347" width="16" height="4" fill="#c0c0c0"/><rect x="558.0" y="347" width="16" height="4" fill="#c0c0c0"/><rect x="590.0" y="347" width="16" height="4" fill="#c0c0c0"/><rect x="622.0" y="347" width="16" height="4" fill="#c0c0c0"/><rect x="654.0" y="347" width="16" height="4" fill="#c0c0c0"/><rect x="505.0" y="355.2" width="10" height="3.6" fill="#c0c0c0" transform="rotate(-45 510 357)"/><rect x="500" y="373.0" width="4" height="16" fill="#c0c0c0"/><rect x="553.5" y="355.7" width="10" height="3.6" fill="#f0f000" transform="rotate(45 558.5 357.5)"/><rect x="568.5" y="370.7" width="10" height="3.6" fill="#c0c0c0" transform="rotate(45 573.5 372.5)"/><rect x="590.0" y="379" width="16" height="4" fill="#c0c0c0"/><rect x="622.0" y="379" width="16" height="4" fill="#c0c0c0"/><rect x="654.0" y="379" width="16" height="4" fill="#c0c0c0"/><rect x="814.0" y="347" width="16" height="4" fill="#c0c0c0"/><rect x="846.0" y="347" width="16" height="4" fill="#c0c0c0"/><rect x="878.0" y="347" width="16" height="4" fill="#c0c0c0"/><rect x="910.0" y="347" width="16" height="4" fill="#c0c0c0"/><rect x="937.0" y="355.2" width="10" height="3.6" fill="#c0c0c0" transform="rotate(45 942 357)"/><rect x="952.0" y="371.2" width="10" height="3.6" fill="#c0c0c0" transform="rotate(45 957 373)"/><rect x="969.0" y="387.2" width="10" height="3.6" fill="#c0c0c0" transform="rotate(45 974 389)"/><rect x="814.0" y="379" width="16" height="4" fill="#c0c0c0"/><rect x="846.0" y="379" width="16" height="4" fill="#c0c0c0"/><rect x="878.0" y="379" width="16" height="4" fill="#c0c0c0"/><rect x="910.0" y="379" width="16" height="4" fill="#c0c0c0"/><rect x="942.0" y="379" width="16" height="4" fill="#f0f000"/><rect x="500" y="533.0" width="4" height="16" fill="#c0c0c0"/><rect x="504.5" y="562.7" width="10" height="3.6" fill="#c0c0c0" transform="rotate(45 509.5 564.5)"/><rect x="526.0" y="571" width="16" height="4" fill="#f0f000"/><rect x="558.0" y="571" width="16" height="4" fill="#f00000"/><rect x="590.0" y="571" width="16" height="4" fill="#f00000"/><rect x="622.0" y="571" width="16" height="4" fill="#f00000"/><rect x="654.0" y="571" width="16" height="4" fill="#f00000"/><rect x="521.5" y="562.7" width="10" height="3.6" fill="#c0c0c0" transform="rotate(-45 526.5 564.5)"/><rect x="537.5" y="546.2" width="10" height="3.6" fill="#c0c0c0" transform="rotate(-45 542.5 548)"/><rect x="558.0" y="539" width="16" height="4" fill="#c0c0c0"/><rect x="590.0" y="539" width="16" height="4" fill="#c0c0c0"/><rect x="622.0" y="539" width="16" height="4" fill="#c0c0c0"/><rect x="654.0" y="539" width="16" height="4" fill="#c0c0c0"/><rect x="590.0" y="507" width="16" height="4" fill="#c0c0c0"/><rect x="622.0" y="507" width="16" height="4" fill="#c0c0c0"/><rect x="654.0" y="507" width="16" height="4" fill="#c0c0c0"/><rect x="814.0" y="507" width="16" height="4" fill="#c0c0c0"/><rect x="846.0" y="507" width="16" height="4" fill="#c0c0c0"/><rect x="873.5" y="515.7" width="10" height="3.6" fill="#c0c0c0" transform="rotate(45 878.5 517.5)"/><rect x="889.0" y="531.2" width="10" height="3.6" fill="#c0c0c0" transform="rotate(45 894 533)"/><rect x="905.5" y="547.7" width="10" height="3.6" fill="#c0c0c0" transform="rotate(45 910.5 549.5)"/><rect x="921.0" y="563.2" width="10" height="3.6" fill="#c0c0c0" transform="rotate(45 926 565)"/><rect x="814.0" y="539" width="16" height="4" fill="#c0c0c0"/><rect x="846.0" y="539" width="16" height="4" fill="#c0c0c0"/><rect x="878.0" y="539" width="16" height="4" fill="#f0f000"/><rect x="814.0" y="571" width="16" height="4" fill="#f00000"/><rect x="846.0" y="571" width="16" height="4" fill="#f00000"/><rect x="878.0" y="571" width="16" height="4" fill="#f00000"/><rect x="910.0" y="571" width="16" height="4" fill="#f0f000"/><rect x="942.0" y="571" width="16" height="4" fill="#f0f000"/><rect x="969.0" y="563.2" width="10" height="3.6" fill="#f0f000" transform="rotate(-45 974 565)"/><rect x="980" y="533.0" width="4" height="16" fill="#f0f000"/>
<circle cx="502" cy="381" r="4.5" fill="#00ff00" stroke="#000" stroke-width="1"/>
<circle cx="822" cy="349" r="4.5" fill="#00ff00" stroke="#000" stroke-width="1"/>
<circle cx="822" cy="381" r="4.5" fill="#00ff00" stroke="#000" stroke-width="1"/>
<circle cx="982" cy="381" r="4.5" fill="#00ff00" stroke="#000" stroke-width="1"/>
<circle cx="502" cy="541" r="4.5" fill="#00ff00" stroke="#000" stroke-width="1"/>
<circle cx="662" cy="541" r="4.5" fill="#00ff00" stroke="#000" stroke-width="1"/>
<circle cx="566" cy="573" r="4.5" fill="#00ff00" stroke="#000" stroke-width="1"/>
<circle cx="822" cy="509" r="4.5" fill="#00ff00" stroke="#000" stroke-width="1"/>
<circle cx="822" cy="541" r="4.5" fill="#00ff00" stroke="#000" stroke-width="1"/>
<circle cx="886" cy="573" r="4.5" fill="#00ff00" stroke="#000" stroke-width="1"/>
<circle cx="982" cy="541" r="4.5" fill="#00ff00" stroke="#000" stroke-width="1"/>
<rect x="679" y="337" width="126" height="24" fill="#fff" stroke="#000" stroke-width="2"/>
<rect x="679" y="369" width="126" height="24" fill="#fff" stroke="#000" stroke-width="2"/>
<rect x="679" y="497" width="126" height="24" fill="#fff" stroke="#000" stroke-width="2"/>
<rect x="679" y="529" width="126" height="24" fill="#fff" stroke="#000" stroke-width="2"/>
<rect x="679" y="561" width="126" height="24" fill="#ffc8c8" stroke="#000" stroke-width="2"/>
<rect x="490" y="398" width="24" height="126" fill="#fff" stroke="#000" stroke-width="2"/>
<rect x="970" y="398" width="24" height="126" fill="#ffffcc" stroke="#000" stroke-width="2"/>
<text x="688" y="354" font-family="Liberation Sans" font-size="13.5" fill="#111" textLength="22" lengthAdjust="spacingAndGlyphs" >bk4</text>
<text x="688" y="386" font-family="Liberation Sans" font-size="13.5" fill="#111" textLength="22" lengthAdjust="spacingAndGlyphs" >bk5</text>
<text x="688" y="514" font-family="Liberation Sans" font-size="13.5" fill="#111" textLength="22" lengthAdjust="spacingAndGlyphs" >bk7</text>
<text x="688" y="546" font-family="Liberation Sans" font-size="13.5" fill="#111" textLength="22" lengthAdjust="spacingAndGlyphs" >bk2</text>
<text x="688" y="578" font-family="Liberation Sans" font-size="13.5" fill="#111" textLength="61" lengthAdjust="spacingAndGlyphs" >bk1 E444R</text>
<text x="0" y="0" font-family="Liberation Sans" font-size="14" fill="#111" textLength="22" lengthAdjust="spacingAndGlyphs" transform="translate(497 405) rotate(90)">bk6</text>
<text x="0" y="0" font-family="Liberation Sans" font-size="14" fill="#111" textLength="60" lengthAdjust="spacingAndGlyphs" transform="translate(988 516) rotate(-90)">bk3 E444R</text>
<path d="M798.0 341.5 H803.0 M800.5 339.0 V344.0" stroke="#000" stroke-width="1"/>
<path d="M798.0 373.5 H803.0 M800.5 371.0 V376.0" stroke="#000" stroke-width="1"/>
<path d="M798.0 501.5 H803.0 M800.5 499.0 V504.0" stroke="#000" stroke-width="1"/>
<path d="M798.0 533.5 H803.0 M800.5 531.0 V536.0" stroke="#000" stroke-width="1"/>
<path d="M798.0 565.5 H803.0 M800.5 563.0 V568.0" stroke="#000" stroke-width="1"/>
<path d="M492.0 402.5 H497.0 M494.5 400.0 V405.0" stroke="#000" stroke-width="1"/>
<path d="M987.0 519.5 H992.0 M989.5 517.0 V522.0" stroke="#000" stroke-width="1"/>
<path d="M798.5 569.5 L803.5 573 L798.5 576.5Z" fill="#000"/>
<text x="549" y="343" font-family="Liberation Sans" font-size="9.5" fill="#222">sw5</text>
<text x="806" y="344" font-family="Liberation Sans" font-size="9.5" fill="#222">fb7</text>
<text x="806" y="376" font-family="Liberation Sans" font-size="9.5" fill="#222">fb6</text>
<text x="966" y="376" font-family="Liberation Sans" font-size="9.5" fill="#222">fb8</text>
<text x="933" y="394.5" font-family="Liberation Sans" font-size="9.5" fill="#222">sw4</text>
<text x="646" y="536" font-family="Liberation Sans" font-size="9.5" fill="#222">fb4</text>
<text x="550" y="568" font-family="Liberation Sans" font-size="9.5" fill="#222">fb3</text>
<text x="517" y="585.5" font-family="Liberation Sans" font-size="9.5" fill="#222">sw2</text>
<text x="806" y="504" font-family="Liberation Sans" font-size="9.5" fill="#222">fb11</text>
<text x="806" y="536" font-family="Liberation Sans" font-size="9.5" fill="#222">fb2</text>
<text x="870" y="554.8" font-family="Liberation Sans" font-size="9.5" fill="#222">sw3</text>
<text x="870" y="568" font-family="Liberation Sans" font-size="9.5" fill="#222">fb1</text>
<text x="902" y="586" font-family="Liberation Sans" font-size="9.5" fill="#222">sw1</text>
<text x="0" y="0" font-family="Liberation Sans" font-size="9.5" fill="#222" transform="translate(507 366) rotate(90)">fb5</text>
<text x="0" y="0" font-family="Liberation Sans" font-size="9.5" fill="#222" transform="translate(507 526) rotate(90)">fb10</text>
<text x="0" y="0" font-family="Liberation Sans" font-size="9.5" fill="#222" transform="translate(978 557) rotate(-90)">fb9</text>
</svg>
<!--LOGS-->
<div class="a nw" style="left:1px;top:648px;font-size:12px">Server</div>
<div class="a nw" style="left:405px;top:648px;font-size:12px">Centrale</div>
<div class="a" style="left:0px;top:663px;width:401px;height:70px;background:#fff;border:1px solid #a9a9a9;border-right-color:#dcdcdc"></div>
<div class="a" style="left:383px;top:664px;width:17px;height:64px;background:linear-gradient(90deg,#e8e8e8,#f2f2f2 50%,#e8e8e8)"></div>
<div class="a" style="left:384px;top:683px;width:15px;height:25px;border:1px solid #979797;border-radius:2px;background:linear-gradient(90deg,#f2f2f2 0%,#e6e6e6 50%,#d4d4d4 51%,#cfcfcf 100%)"></div>
<div class="a" style="left:405px;top:663px;width:944px;height:70px;background:#fff;border:1px solid #a9a9a9"></div>
<div class="a" style="left:1330px;top:664px;width:17px;height:64px;background:linear-gradient(90deg,#e8e8e8,#f2f2f2 50%,#e8e8e8)"></div>
<div class="a" style="left:1331px;top:683px;width:15px;height:16px;border:1px solid #979797;border-radius:2px;background:linear-gradient(90deg,#f2f2f2 0%,#e6e6e6 50%,#d4d4d4 51%,#cfcfcf 100%)"></div>
<svg class="a" style="left:0;top:660px" width="1366" height="70" viewBox="0 660 1366 70">
 <path d="M387 676 L391 672 L395 676Z M1334 676 L1338 672 L1342 676Z" fill="#333"/>
 <path d="M388 693.5 H395 M388 696.5 H395 M388 699.5 H395" stroke="#555"/>
</svg>
<div class="a nw" style="left:3px;top:666px;font-size:12px;line-height:15px;color:#4c4c4c;letter-spacing:-.1px">14:26:04 Ghost train no longer in block bk7, fbid=fb11, code=<br>14:26:04 Ghost train no longer in block bk6, fbid=fb10, code=<br>14:26:04 Ghost train no longer in block bk3, fbid=fb9, code=<br>14:26:04 Ghost train still remains in block bk3, fbid=fb8, code=</div>
<div class="a nw" style="left:407px;top:666px;font-size:12px;line-height:15px;color:#4c4c4c;letter-spacing:-.1px">14:26:28 sw addr=0 gate=1 value=0<br>14:26:26 sw addr=0 gate=1 value=1<br>14:26:26 switch addr=0 dir=1 action=1<br>14:26:04 sensor=11 value=0</div>
<!-- right frame and background window -->
<div class="a" style="left:1349px;top:191px;width:7px;height:537px;background:linear-gradient(90deg,#b4cce6,#bcd3eb)"></div>
<div class="a" style="left:1356px;top:168px;width:1px;height:560px;background:#0b1420"></div>
<div class="a" style="left:1357px;top:164px;width:9px;height:564px;background:#fff"></div>
<div class="a" style="left:1357px;top:199px;width:9px;height:1px;background:#d8e4ea"></div>
<div class="a" style="left:1357px;top:241px;width:9px;height:1px;background:#b8b8b8"></div>
<div class="a" style="left:1357px;top:249px;width:9px;height:356px;background:#efefef;border-top:1px solid #111;border-bottom:1px solid #111"></div>
<svg class="a" style="left:1357px;top:250px" width="9" height="356" viewBox="1357 250 9 356"><path d="M1358 260 L1361.5 256.5 L1365 260Z M1358 596 L1361.5 599.5 L1365 596Z" fill="#333"/><rect x="1357.5" y="268.5" width="9" height="16" rx="1.5" fill="#e2e2e2" stroke="#888"/><path d="M1358 273.5 H1362 M1358 276.5 H1362 M1358 279.5 H1362" stroke="#555"/></svg>
<div class="a" style="left:1357px;top:610px;width:3px;height:18px;background:#d9a0e0"></div>
<div class="a" style="left:1357px;top:668px;width:9px;height:1px;background:#d0dce4"></div>
<svg class="a" style="left:1357px;top:690px" width="9" height="38" viewBox="1357 690 9 38"><circle cx="1372" cy="712" r="17" fill="#f04a20"/><path d="M1358 702 L1366 712 M1358 722 L1366 712" stroke="#fff" stroke-width="3"/></svg>
<!-- taskbar -->
<div class="a" style="left:0;top:728px;width:1366px;height:40px;background:linear-gradient(90deg,#8497ae 0%,#8699b0 4.5%,#a3bbd7 6.5%,#a9c1dd 10%,#a7bfdb 38%,#a6bedb 79%,#8ba0b8 84%,#8196ad 100%);border-top:1px solid #2f3a45"></div>
<div class="a" style="left:0;top:729px;width:1366px;height:1px;background:rgba(255,255,255,.35)"></div>
<svg class="a" style="left:0;top:728px" width="1366" height="40" viewBox="0 728 1366 40">
 <defs>
  <radialGradient id="orb" cx="50%" cy="35%" r="60%"><stop offset="0" stop-color="#9ec4e4"/><stop offset=".45" stop-color="#3c78b0"/><stop offset=".8" stop-color="#0e4a8a"/><stop offset="1" stop-color="#0a3466"/></radialGradient>
 </defs>
 <circle cx="27" cy="747.5" r="18" fill="url(#orb)" stroke="#d8e4f0" stroke-width="1" stroke-opacity=".6"/>
 <path d="M10 747 Q27 734 44 747 Q44 731 27 729.5 Q10 731 10 747Z" fill="#fff" opacity=".28"/>
 <ellipse cx="27" cy="762" rx="9" ry="3" fill="#3ad8ff" opacity=".55"/>
 <path d="M19 737.5 Q23 735.5 28.5 737.5 L27 745.5 Q22.5 744 17.5 745.5Z" fill="#f05a1e"/>
 <path d="M29.5 738 Q34.5 740 39 738 L37.5 746 Q33 747.5 28 746Z" fill="#82c22a"/>
 <path d="M17.3 747 Q22 745.5 26.7 747 L25.2 755 Q20.5 753.5 15.8 755.5Z" fill="#1a8ee0"/>
 <path d="M27.8 747.3 Q32.5 749 37.3 747.3 L35.8 755.3 Q31 757 26.3 755.5Z" fill="#fcb814"/>
 <!-- IE -->
 <text x="0" y="0" font-family="Liberation Sans" font-size="46" font-weight="bold" fill="#55c4f2" stroke="#1f7fc8" stroke-width="1.2" transform="translate(76 761) scale(1.05 1)">e</text>
 <path d="M79 762 Q72 756 82 744 Q94 731 101 732 Q106 734 100 742" fill="none" stroke="#f6b80e" stroke-width="3"/>
 <!-- explorer folder -->
 <path d="M136 739 H148 L151 742 H166 V760 H136Z" fill="#e8c85c" stroke="#b8943a" stroke-width=".8"/>
 <rect x="138" y="740" width="26" height="6" fill="#fff6d8"/>
 <path d="M136 747 H166 V762 H136Z" fill="#f5d77a" stroke="#c19c3c" stroke-width=".8"/>
 <path d="M143 762 V752 H159 V762 H155 V756 H147 V762Z" fill="#5aa8e8"/>
 <!-- media player -->
 <rect x="200" y="739" width="22" height="22" rx="3" fill="#7fb6e6" stroke="#5a8cbc"/>
 <rect x="203" y="742" width="22" height="20" rx="2" fill="#a9cff0" opacity=".7"/>
 <circle cx="210.5" cy="750" r="8" fill="#f47a20" stroke="#fff" stroke-width="1.2"/>
 <path d="M207.5 745.5 L215 750 L207.5 754.5Z" fill="#fff"/>
 <!-- taskbar buttons -->
 <defs><linearGradient id="tbb" x1="0" y1="0" x2="0" y2="1"><stop offset="0" stop-color="#e2ecf6"/><stop offset=".45" stop-color="#c8d9ea"/><stop offset="1" stop-color="#b4c9e0"/></linearGradient>
 <linearGradient id="plg" x1="0" y1="0" x2="1" y2="1"><stop offset="0" stop-color="#9a9a9a"/><stop offset="1" stop-color="#3a3a3a"/></linearGradient>
 <linearGradient id="win" x1="0" y1="0" x2="1" y2="1"><stop offset="0" stop-color="#3a8ad0"/><stop offset="1" stop-color="#4aae6a"/></linearGradient></defs>
 <rect x="245.5" y="729.5" width="59" height="37.5" rx="3" fill="url(#tbb)" stroke="#5f7b98"/>
 <rect x="307.5" y="729.5" width="53" height="37.5" rx="3" fill="url(#tbb)" stroke="#5f7b98"/>
 <rect x="362" y="730" width="3" height="36" fill="#b6cbe2" stroke="#7e98b2" stroke-width=".6"/>
 <rect x="369.5" y="729.5" width="59" height="37.5" rx="3" fill="url(#tbb)" stroke="#5f7b98"/>
 <!-- plug icon -->
 <path d="M260 749 L281 737 L289 741 L289 746 L268 757 L260 753Z" fill="url(#plg)" stroke="#2a2a2a" stroke-width=".7"/>
 <path d="M284 742 L290 739 L291 744 L286 747Z" fill="#888"/>
 <circle cx="277" cy="752" r="7" fill="#d8d8d8" stroke="#666" stroke-width=".8"/>
 <circle cx="277" cy="751" r="3.5" fill="#f4f4f4"/>
 <path d="M277.5 756 L281 761.5 M283 753 L287 758" stroke="#e6b800" stroke-width="3" stroke-linecap="round"/>
 <!-- rocrail icon -->
 <rect x="318" y="732" width="32" height="32" rx="6" fill="#fff"/>
 <text x="325" y="748" font-family="Liberation Sans" font-size="11" fill="#111" textLength="22" lengthAdjust="spacingAndGlyphs">rocrail</text>
 <path d="M320 749.5 H349" stroke="#111" stroke-width="1"/><path d="M347 748 L349.5 749.5 L347 751" fill="none" stroke="#111" stroke-width=".8"/>
 <path d="M325.5 742 V757" stroke="#111" stroke-width="1"/>
 <path d="M334 753 H345" stroke="#999" stroke-width="1.2"/>
 <!-- app window icon -->
 <rect x="384.5" y="735.5" width="29" height="24" fill="#fbfbfb" stroke="#888"/>
 <rect x="384.5" y="735.5" width="29" height="2" fill="#d8dde4"/>
 <rect x="386.5" y="740" width="11.5" height="16" fill="url(#win)" stroke="#8aa" stroke-width=".6"/>
 <path d="M400 741.5 H407 M400 744 H407 M400 746.5 H407 M400 749 H407 M400 751.5 H407 M400 754 H407" stroke="#aaa" stroke-width=".8"/>
 <rect x="408.5" y="740" width="1.8" height="9" fill="#2a7ac8"/>
 <!-- tray -->
 <text x="1127" y="751" font-family="Liberation Sans" font-size="12" fill="#e6edf5">IT</text>
 <path d="M1155 750 L1159.5 745 L1164 750Z" fill="#f2f6fa"/>
 <rect x="1177" y="742" width="11" height="14" rx="2" fill="#fff" stroke="#222" stroke-width="1"/>
 <rect x="1179" y="744" width="7" height="10" fill="#cfd6de"/>
 <path d="M1184 746 H1191 V751 Q1191 753 1188 753 H1186 V758 H1184Z" fill="#fff" stroke="#222" stroke-width=".9"/>
 <path d="M1186 743 V746 M1189 743 V746" stroke="#222" stroke-width="1.2"/>
 <path d="M1201 742 V757" stroke="#fff" stroke-width="2"/><path d="M1201.5 742 V757" stroke="#222" stroke-width=".8"/>
 <path d="M1202 743 H1210 L1213 745 H1216 L1214 751 H1208 L1205 749 H1202Z" fill="#fff" stroke="#222" stroke-width=".7"/>
 <path d="M1225 746 H1228 L1233 742 V756 L1228 752 H1225Z" fill="#fff" stroke="#222" stroke-width=".8"/>
 <path d="M1235 746 Q1237 749 1235 752 M1237.5 744 Q1241 749 1237.5 754" fill="none" stroke="#fff" stroke-width="1.2"/>
 <rect x="1252" y="745" width="12" height="9" fill="#fff" stroke="#222" stroke-width=".8"/>
 <rect x="1254" y="747" width="8" height="5" fill="#7c95b0"/>
 <path d="M1258 754 V757 M1254 757 H1262" stroke="#fff" stroke-width="1.2"/>
 <path d="M1249 742 V752" stroke="#fff" stroke-width="2"/>
 <text x="1298" y="745.5" font-family="Liberation Sans" font-size="12.5" fill="#f2f6fa" textLength="26" lengthAdjust="spacingAndGlyphs">14:27</text>
 <text x="1282" y="762.5" font-family="Liberation Sans" font-size="12.5" fill="#f2f6fa" textLength="57.5" lengthAdjust="spacingAndGlyphs">07/08/2020</text>
 <rect x="1352.5" y="729.5" width="13" height="38" fill="#6c7f94" stroke="#3a4858" stroke-width="1"/>
 <rect x="1354" y="731" width="11" height="18" fill="#8a9cb0" opacity=".6"/>
</svg>

<!--TASKBAR-->

</body></html>
